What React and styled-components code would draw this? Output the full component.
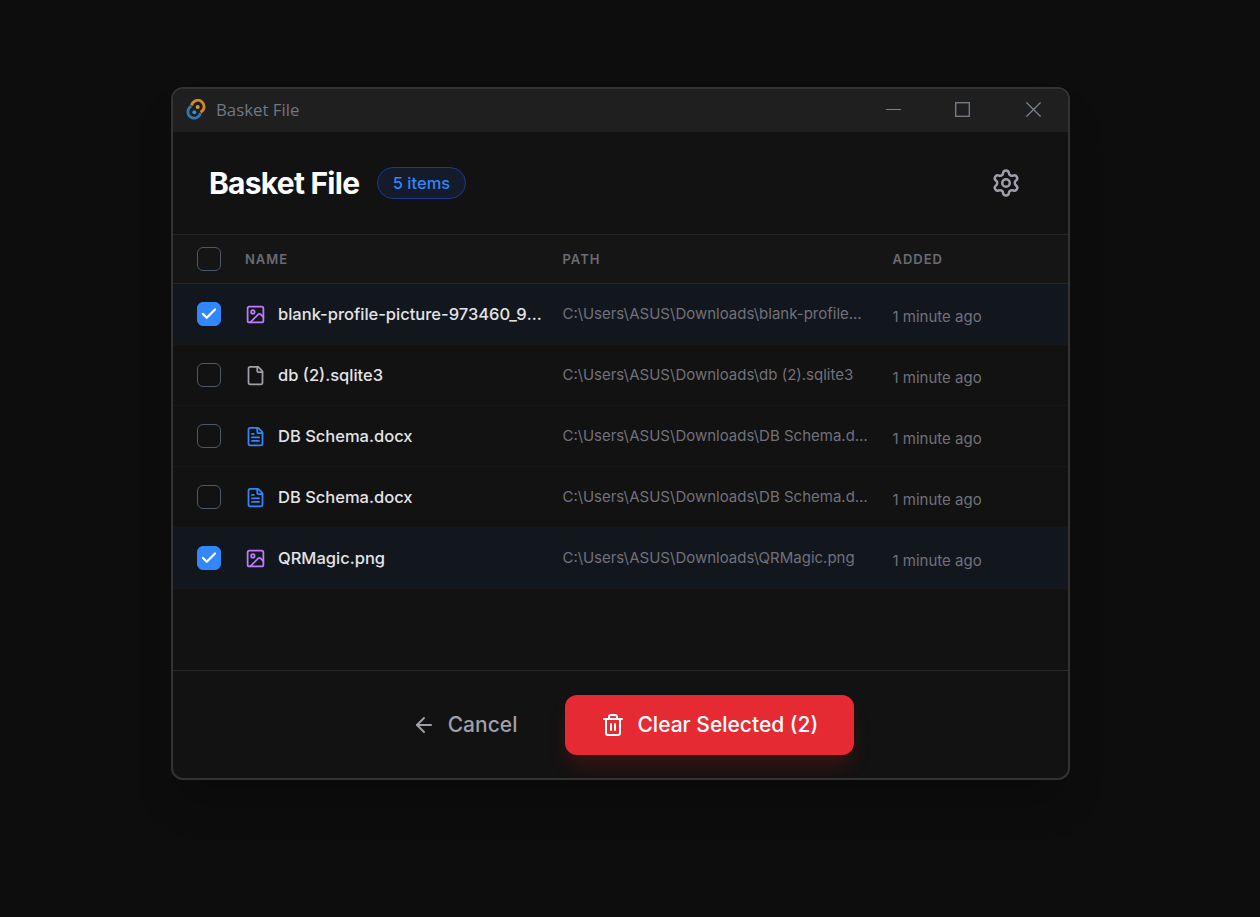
import React, { useState } from 'react'
import styled, { createGlobalStyle, css } from 'styled-components'
import { ArrowLeft, Check, File, FileText, Image, Settings, Trash2 } from 'lucide-react'

const files = [
  {
    id: 1,
    name: 'blank-profile-picture-973460_960_720.png',
    path: 'C:\\Users\\ASUS\\Downloads\\blank-profile-picture-973460_960_720.png',
    kind: 'image',
  },
  { id: 2, name: 'db (2).sqlite3', path: 'C:\\Users\\ASUS\\Downloads\\db (2).sqlite3', kind: 'file' },
  { id: 3, name: 'DB Schema.docx', path: 'C:\\Users\\ASUS\\Downloads\\DB Schema.docx', kind: 'doc' },
  { id: 4, name: 'DB Schema.docx', path: 'C:\\Users\\ASUS\\Downloads\\DB Schema.docx', kind: 'doc' },
  { id: 5, name: 'QRMagic.png', path: 'C:\\Users\\ASUS\\Downloads\\QRMagic.png', kind: 'image' },
]

const kinds = {
  image: { icon: Image, color: '#c27aff' },
  file: { icon: File, color: '#9f9fa9' },
  doc: { icon: FileText, color: '#3088ff' },
}

const Logo = () => (
  <svg width="20" height="22" viewBox="0 .8 20 22" fill="none">
    <path d="M5.6 7.2A6.3 6.3 0 1 1 14.6 14" stroke="#d08a2c" strokeWidth="2.8" />
    <path d="M14.4 14.8A6.3 6.3 0 1 1 5.4 8" stroke="#2f78b0" strokeWidth="2.8" />
    <circle cx="11.7" cy="8.7" r="2" fill="#e0952f" />
    <circle cx="8.3" cy="14" r="2" fill="#3590cc" />
  </svg>
)

export default function App() {
  const [selected, setSelected] = useState([1, 5])

  const toggle = id =>
    setSelected(selected.includes(id) ? selected.filter(s => s !== id) : [...selected, id])

  const all = selected.length === files.length

  return (
    <Page>
      <GlobalStyle />
      <Window>
        <TitleBar>
          <Logo />
          <WindowTitle>Basket File</WindowTitle>
          <Controls>
            <svg width="15" height="15" viewBox="0 0 15 15">
              <path d="M0 7.5h15" />
            </svg>
            <svg width="15" height="15" viewBox="0 0 15 15">
              <rect x=".7" y=".7" width="13.6" height="13.6" />
            </svg>
            <svg width="15" height="15" viewBox="0 0 15 15">
              <path d="M.4.4l14.2 14.2M14.6.4L.4 14.6" />
            </svg>
          </Controls>
        </TitleBar>

        <Header>
          <Title>Basket File</Title>
          <Badge>{files.length} items</Badge>
          <SettingsButton aria-label="Settings">
            <Settings size={30} />
          </SettingsButton>
        </Header>

        <TableHead>
          <Checkbox
            aria-label="Select all"
            checked={all}
            onClick={() => setSelected(all ? [] : files.map(f => f.id))}
          />
          <span>NAME</span>
          <span>PATH</span>
          <span>ADDED</span>
        </TableHead>

        <Rows>
          {files.map(({ id, name, path, kind }) => {
            const { icon: Icon, color } = kinds[kind]
            const active = selected.includes(id)
            return (
              <Row key={id} $active={active}>
                <Checkbox aria-label={name} checked={active} onClick={() => toggle(id)} />
                <NameCell>
                  <Icon size={21} color={color} />
                  <Name>{name}</Name>
                </NameCell>
                <Path>{path}</Path>
                <Added>1 minute ago</Added>
              </Row>
            )
          })}
        </Rows>

        <Footer>
          <CancelButton onClick={() => setSelected([])}>
            <ArrowLeft size={24} />
            Cancel
          </CancelButton>
          <ClearButton>
            <Trash2 size={24} />
            Clear Selected ({selected.length})
          </ClearButton>
        </Footer>
      </Window>
    </Page>
  )
}

const Checkbox = ({ checked, ...props }) => (
  <Box type="button" role="checkbox" aria-checked={checked} $checked={checked} {...props}>
    {checked && <Check size={18} strokeWidth={3} />}
  </Box>
)

const GlobalStyle = createGlobalStyle`
  * {
    box-sizing: border-box;
  }

  body {
    margin: 0;
    background: #0d0d0d;
    font-family: Inter, sans-serif;
  }

  button {
    font-family: inherit;
    border: none;
    padding: 0;
    background: none;
    cursor: pointer;
  }

  svg {
    flex-shrink: 0;
  }
`

const Page = styled.div`
  height: 917px;
  padding: 87px 0 0 171px;
  overflow: hidden;
`

const Window = styled.main`
  width: 899px;
  height: 693px;
  display: flex;
  flex-direction: column;
  overflow: hidden;
  border: 2px solid #333;
  border-radius: 12px;
  background: #121212;
  box-shadow: 0 28px 40px -8px rgba(0, 0, 0, 0.22);
`

const TitleBar = styled.div`
  height: 43px;
  display: flex;
  align-items: center;
  padding: 0 27px 2px 13px;
  background: #1f1f1f;
`

const WindowTitle = styled.span`
  margin-left: 10px;
  font-family: 'Open Sans', sans-serif;
  font-size: 16.8px;
  color: #717784;
`

const Controls = styled.div`
  margin-left: auto;
  display: flex;
  gap: 56px;

  svg {
    fill: none;
    stroke: #7a818c;
    stroke-width: 1.3;
  }

  svg:first-child {
    margin-right: -2px;
    stroke-width: 1;
  }
`

const Header = styled.header`
  height: 103px;
  display: flex;
  align-items: center;
  padding: 0 47px 0 36px;
  border-bottom: 1px solid #262626;
`

const Title = styled.h1`
  margin: 0;
  font-size: 30px;
  font-weight: 700;
  letter-spacing: -0.75px;
  color: #fff;
`

const Badge = styled.span`
  height: 32px;
  margin-left: 18px;
  padding: 0 14.5px;
  display: flex;
  align-items: center;
  border: 1px solid #193a8c;
  border-radius: 16px;
  background: #141b2a;
  font-size: 16.5px;
  font-weight: 500;
  color: #2f86ff;
`

const SettingsButton = styled.button`
  margin-left: auto;
  display: flex;
  color: #9f9fa9;
`

const columns = css`
  display: grid;
  grid-template-columns: 24px 293.5px 306px 1fr;
  column-gap: 24px;
  align-items: center;
  padding: 0 24px;
`

const TableHead = styled.div`
  ${columns};
  height: 49px;
  border-bottom: 1px solid #272727;
  background: #151515;
  font-size: 13px;
  font-weight: 600;
  letter-spacing: 1px;
  color: #6b6b73;
`

const Rows = styled.div`
  flex: 1;
`

const Row = styled.div`
  ${columns};
  height: 61px;
  border-bottom: 1px solid #18181a;
  background: ${props => (props.$active ? '#12171e' : 'transparent')};
`

const Box = styled.button`
  width: 24px;
  height: 24px;
  display: flex;
  align-items: center;
  justify-content: center;
  border: 1px solid ${props => (props.$checked ? '#3287ff' : '#4d5866')};
  border-radius: 6px;
  background: ${props => (props.$checked ? '#3287ff' : 'transparent')};
  color: #fff;
`

const ellipsis = css`
  overflow: hidden;
  text-overflow: ellipsis;
  white-space: nowrap;
`

const NameCell = styled.div`
  min-width: 0;
  display: flex;
  align-items: center;
  gap: 12px;
`

const Name = styled.span`
  ${ellipsis};
  flex: 0 0 266px;
  font-size: 16.5px;
  font-weight: 500;
  color: #e4e4e7;
`

const Path = styled.span`
  ${ellipsis};
  padding-bottom: 2px;
  font-size: 15px;
  color: #71717b;
`

const Added = styled.span`
  padding-top: 5px;
  font-size: 15px;
  color: #71717b;
`

const Footer = styled.footer`
  height: 108px;
  display: flex;
  align-items: center;
  justify-content: center;
  gap: 24px;
  padding-left: 1px;
  border-top: 1px solid #282828;
`

const CancelButton = styled.button`
  height: 60px;
  padding: 0 24px;
  display: flex;
  align-items: center;
  gap: 12px;
  font-size: 21px;
  font-weight: 500;
  color: #9f9fa9;
`

const ClearButton = styled.button`
  height: 60px;
  padding: 0 36px;
  display: flex;
  align-items: center;
  gap: 12px;
  border-radius: 12px;
  background: #e62a33;
  box-shadow: 0 13px 20px -3px rgba(231, 30, 35, 0.2);
  font-size: 21px;
  font-weight: 500;
  color: #fff;
`
